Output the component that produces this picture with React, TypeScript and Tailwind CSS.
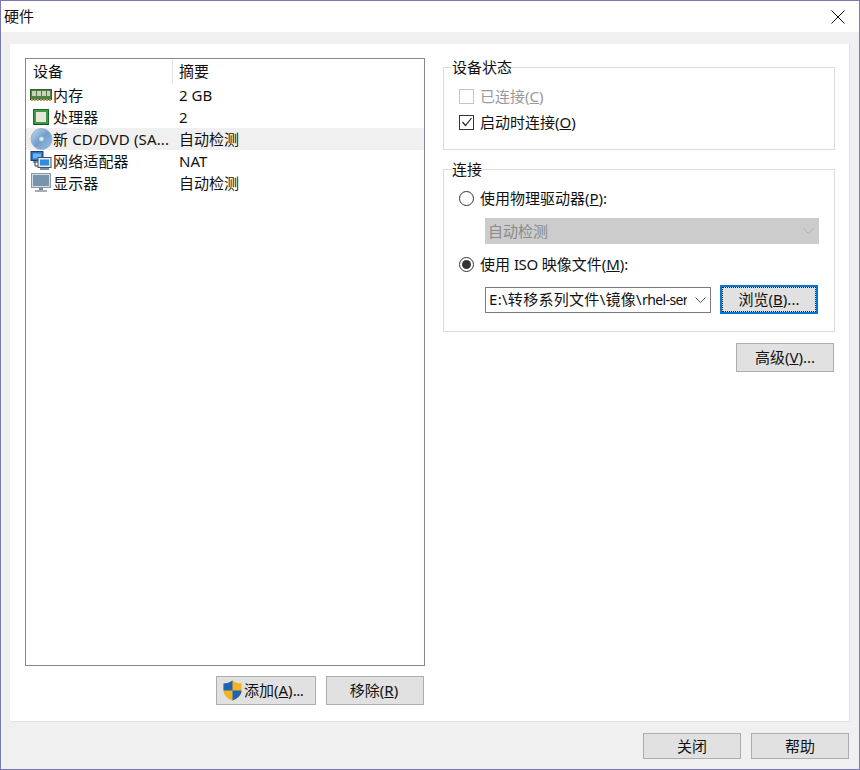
const fontStack = { fontFamily: '"Noto Sans", "Noto Sans CJK SC", sans-serif' };

function RamIcon() {
  return (
    <svg width="22" height="14" viewBox="0 0 22 14" className="shrink-0">
      <rect x="0.5" y="1.5" width="21" height="10" fill="#4f7f44" stroke="#35602c" />
      <rect x="2" y="3" width="4" height="5" fill="#c9d2b8" />
      <rect x="7" y="3" width="4" height="5" fill="#c9d2b8" />
      <rect x="12" y="3" width="4" height="5" fill="#c9d2b8" />
      <rect x="17" y="3" width="3" height="5" fill="#c9d2b8" />
      <path d="M1 12h20" stroke="#a8a060" strokeWidth="2" strokeDasharray="2 1" />
    </svg>
  );
}

function CpuIcon() {
  return (
    <svg width="20" height="18" viewBox="0 0 20 18" className="shrink-0">
      <rect x="2.5" y="1.5" width="15" height="15" fill="#3a9a48" stroke="#1f6b2c" />
      <rect x="5" y="4" width="10" height="10" fill="#e8e8da" />
      <path d="M3 16.5h14" stroke="#14501f" />
    </svg>
  );
}

function DiscIcon() {
  return (
    <svg width="23" height="22" viewBox="0 0 23 22" className="shrink-0">
      <defs>
        <linearGradient id="disc" x1="0" y1="0" x2="1" y2="1">
          <stop offset="0" stopColor="#c8dcec" />
          <stop offset="0.5" stopColor="#6f9fd2" />
          <stop offset="1" stopColor="#9cc0e2" />
        </linearGradient>
      </defs>
      <circle cx="11.5" cy="11" r="10.5" fill="url(#disc)" stroke="#9ab2c8" />
      <circle cx="11.5" cy="11" r="3" fill="#c4d6e6" stroke="#7f9cb8" />
      <circle cx="11.5" cy="11" r="1" fill="#f4f8fb" />
    </svg>
  );
}

function NetworkIcon() {
  return (
    <svg width="22" height="20" viewBox="0 0 22 20" className="shrink-0">
      <rect x="1" y="0.5" width="12" height="9" fill="#2f73c4" stroke="#1d3f73" />
      <rect x="3" y="2.5" width="8" height="5" fill="#6bb6ee" />
      <path d="M5 10v5h4M3 11h6" stroke="#1d3f73" fill="none" />
      <rect x="8" y="6.5" width="13" height="10" fill="#e4eaf0" stroke="#42536b" />
      <rect x="10" y="8.5" width="9" height="6" fill="#2c8ce0" />
      <rect x="10" y="17" width="9" height="2" fill="#7f8c9c" />
    </svg>
  );
}

function MonitorIcon() {
  return (
    <svg width="20" height="20" viewBox="0 0 20 20" className="shrink-0">
      <rect x="0.5" y="0.5" width="19" height="14" fill="#d6dde3" stroke="#8c97a2" />
      <rect x="2" y="2" width="16" height="11" fill="#7a93ad" />
      <rect x="8" y="15" width="4" height="2" fill="#7d8894" />
      <rect x="4" y="17" width="12" height="2" fill="#a4adb6" />
    </svg>
  );
}

function ShieldIcon() {
  return (
    <svg width="19" height="21" viewBox="0 0 19 21" className="shrink-0">
      <path d="M9.5 0.5C7 2.6 4 3.4 0.5 3.4V10.5c0 4.8 3.8 8 9 10 5.2-2 9-5.2 9-10V3.4C15 3.4 12 2.6 9.5 0.5z" fill="#f4b41f" />
      <path d="M9.5 0.5C7 2.6 4 3.4 0.5 3.4V10.5h9zM9.5 10.5v10c5.2-2 9-5.2 9-10z" fill="#1d63b8" />
    </svg>
  );
}

function Button({ children, className }: { children: React.ReactNode; className: string }) {
  return (
    <button
      className={`flex items-center justify-center border border-[#adadad] bg-[#e1e1e1] text-[15px] text-[#111] ${className}`}
    >
      {children}
    </button>
  );
}

function Chevron({ color }: { color: string }) {
  return (
    <svg width="11" height="6" viewBox="0 0 11 6" className="shrink-0">
      <path d="M0.5 0.5l5 5 5-5" fill="none" stroke={color} />
    </svg>
  );
}

function Radio({ checked, children }: { checked?: boolean; children: React.ReactNode }) {
  return (
    <div className="flex h-[20px] items-center gap-[6px] pl-[15px] text-[15px] text-[#111]">
      <span className="flex h-[15px] w-[15px] items-center justify-center rounded-full border border-[#333]">
        {checked && <span className="h-[9px] w-[9px] rounded-full bg-[#333]" />}
      </span>
      <span>{children}</span>
    </div>
  );
}

const rows = [
  { icon: <RamIcon />, name: "内存", summary: "2 GB" },
  { icon: <CpuIcon />, name: "处理器", summary: "2" },
  { icon: <DiscIcon />, name: "新 CD/DVD (SA...", summary: "自动检测", selected: true },
  { icon: <NetworkIcon />, name: "网络适配器", summary: "NAT" },
  { icon: <MonitorIcon />, name: "显示器", summary: "自动检测" },
];

export default function App() {
  return (
    <div
      className="flex h-[770px] w-[860px] flex-col overflow-hidden border border-[#7b78b8] bg-[#f0f0f0] text-[#111]"
      style={fontStack}
    >
      <header className="flex h-[31px] shrink-0 items-center justify-between bg-white pl-[3px] pr-[14px]">
        <span className="text-[15px]">硬件</span>
        <svg width="14" height="14" viewBox="0 0 14 14">
          <path d="M0.5 0.5l13 13M13.5 0.5l-13 13" stroke="#111" />
        </svg>
      </header>

      <main className="mx-[9px] mt-[12px] flex h-[678px] shrink-0 gap-[18px] border-r border-b border-[#e2e2e2] bg-white pl-[15px] pt-[14px]">
        <section className="flex w-[400px] shrink-0 flex-col">
          <div className="h-[608px] border border-[#828790] bg-white text-[15px]">
            <div className="flex h-[25px] items-center">
              <div className="h-full w-[147px] border-r border-[#e5e5e5] pl-[7px] leading-[25px]">设备</div>
              <div className="pl-[6px]">摘要</div>
            </div>
            {rows.map((row) => (
              <div
                key={row.name}
                className={`flex h-[22px] items-center ${row.selected ? "bg-[#f0f0f0]" : ""}`}
              >
                <div className="flex w-[147px] items-center gap-[1px] overflow-hidden whitespace-nowrap pl-[4px]">
                  <span className="flex w-[22px] shrink-0 justify-center">{row.icon}</span>
                  <span className="tracking-[0.15px]">{row.name}</span>
                </div>
                <div className="pl-[6px]">{row.summary}</div>
              </div>
            ))}
          </div>
          <div className="mt-[10px] flex justify-end gap-[10px] pr-[1px]">
            <Button className="h-[29px] w-[100px] justify-start gap-[2px] pl-[6px]">
              <ShieldIcon />
              <span>
                添加(<span className="underline">A</span>)<span className="tracking-[-0.5px]">...</span>
              </span>
            </Button>
            <Button className="h-[29px] w-[98px] pr-[2px]">
              <span>
                移除(<span className="underline">R</span>)
              </span>
            </Button>
          </div>
        </section>

        <section className="flex w-[392px] shrink-0 flex-col">
          <fieldset className="-mt-[1px] h-[93px] border border-[#dcdcdc]">
            <legend className="ml-[8px] h-[20px] text-[15px] leading-[20px]">设备状态</legend>
            <div className="mt-[9px] flex h-[20px] items-center gap-[6px] pl-[15px] text-[15px] text-[#9a9a9a]">
              <span className="h-[15px] w-[15px] border border-[#c4c4c4]" />
              <span>
                已连接(<span className="underline">C</span>)
              </span>
            </div>
            <div className="mt-[6px] flex h-[20px] items-center gap-[6px] pl-[15px] text-[15px]">
              <span className="flex h-[15px] w-[15px] items-center justify-center border border-[#333]">
                <svg width="12" height="10" viewBox="0 0 12 10">
                  <path d="M1.5 5l3 3.5 6-7.5" fill="none" stroke="#222" strokeWidth="1.2" />
                </svg>
              </span>
              <span>
                启动时连接(<span className="underline">O</span>)
              </span>
            </div>
          </fieldset>

          <fieldset className="mt-[9px] h-[173px] border border-[#dcdcdc]">
            <legend className="ml-[8px] h-[20px] text-[15px] leading-[20px]">连接</legend>
            <div className="mt-[9px]">
              <Radio>
                使用物理驱动器(<span className="underline">P</span>):
              </Radio>
            </div>
            <div className="ml-[41px] mt-[10px] flex h-[26px] w-[334px] items-center justify-between bg-[#cccccc] pl-[3px] pr-[5px] text-[15px] text-[#8a8a8a]">
              <span>自动检测</span>
              <Chevron color="#b0b0b0" />
            </div>
            <div className="mt-[10px]">
              <Radio checked>
                使用 <span className="tracking-[-0.4px]">ISO</span> 映像文件(<span className="underline">M</span>):
              </Radio>
            </div>
            <div className="ml-[41px] mt-[11px] flex items-center gap-[9px]">
              <div className="flex h-[26px] w-[226px] items-center justify-between border border-[#7a7a7a] bg-white pl-[3px] pr-[4px] text-[15px]">
                <span className="w-[198px] overflow-hidden whitespace-nowrap">
                  <span className="tracking-[0.3px]">E:\转移系列文件\镜像\</span>
                  <span className="text-[14px] tracking-[-0.6px]">rhel-ser</span>
                </span>
                <Chevron color="#555" />
              </div>
              <button className="flex h-[29px] w-[98px] items-center justify-center border-2 border-[#0078d7] bg-[#e1e1e1] text-[15px] outline-1 -outline-offset-3 outline-dotted outline-[#222]">
                <span>
                  浏览(<span className="underline">B</span>)...
                </span>
              </button>
            </div>
          </fieldset>

          <div className="mt-[11px] flex justify-end pr-[1px]">
            <Button className="h-[29px] w-[98px]">
              <span>
                高级(<span className="underline">V</span>)...
              </span>
            </Button>
          </div>
        </section>
      </main>

      <footer className="mr-[10px] mt-[11px] flex justify-end gap-[10px]">
        <Button className="h-[26px] w-[98px]">关闭</Button>
        <Button className="h-[26px] w-[98px]">帮助</Button>
      </footer>
    </div>
  );
}
